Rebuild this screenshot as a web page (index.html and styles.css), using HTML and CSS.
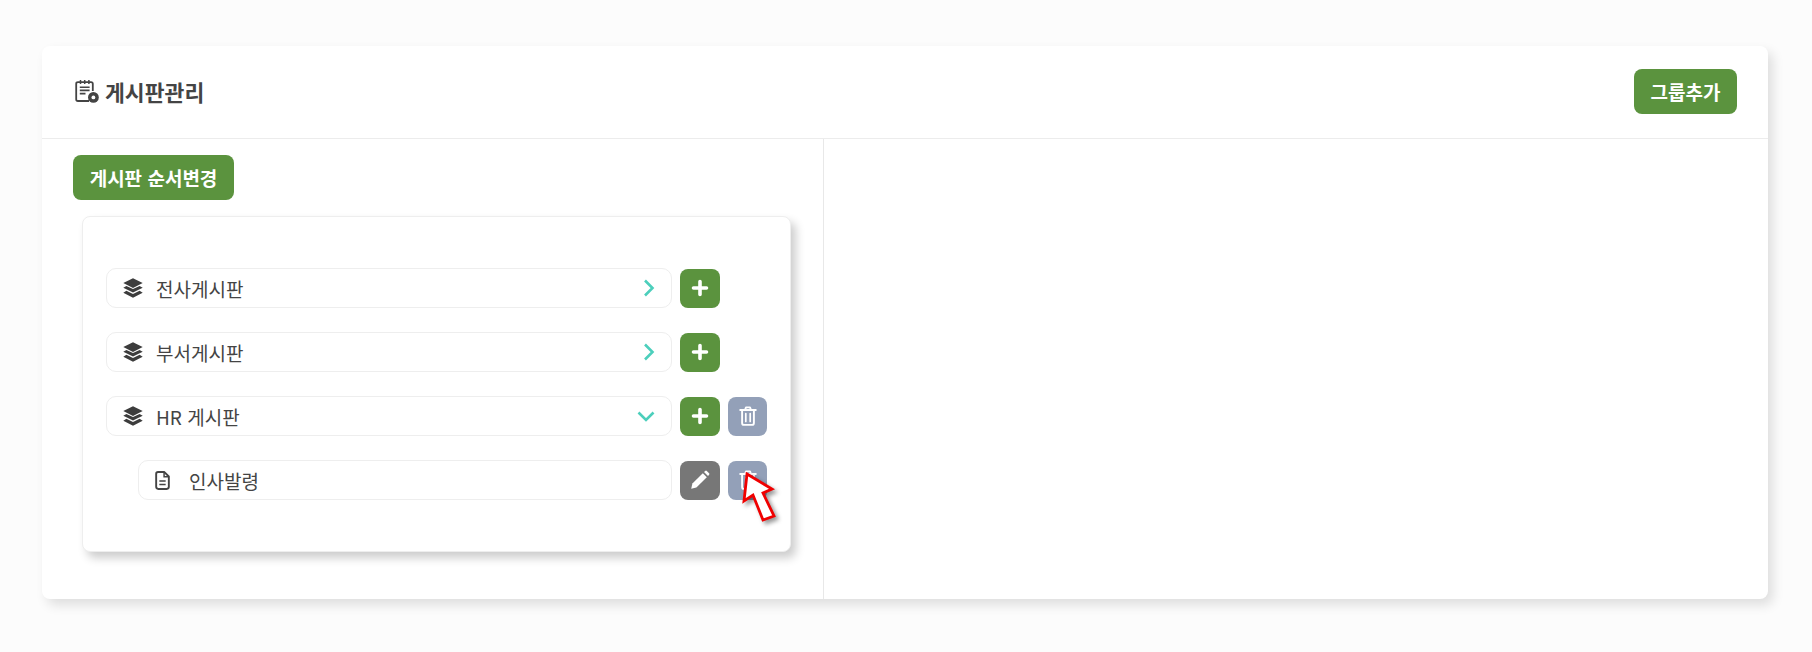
FILE: index.html
```html
<!doctype html>
<html lang="ko">
  <head>
    <meta charset="UTF-8" />
    <title>게시판관리</title>
    <link rel="stylesheet" href="styles.css">
  </head>
  <body>
    <svg class="defs" width="0" height="0">
      <symbol id="layers" viewBox="0 0 20 20">
        <path d="M10 0.3 L19.7 5 L10 9.9 L0.3 5 Z" fill="currentColor"/>
        <path d="M3.4 7.9 L10 11.1 L16.6 7.9 L19.7 9.7 L10 14.6 L0.3 9.7 Z" fill="currentColor"/>
        <path d="M3.4 12.8 L10 16 L16.6 12.8 L19.7 14.8 L10 19.7 L0.3 14.8 Z" fill="currentColor"/>
      </symbol>
      <symbol id="plus" viewBox="0 0 18 18">
        <path d="M9 2.5 V15.5 M2.5 9 H15.5" fill="none" stroke="currentColor" stroke-width="3.6" stroke-linecap="round"/>
      </symbol>
      <symbol id="trash" viewBox="0 0 18 20">
        <path d="M1.2 4 H16.8 M6 4 L7 1.4 H11 L12 4" fill="none" stroke="currentColor" stroke-width="1.9" stroke-linecap="round" stroke-linejoin="round"/>
        <path d="M3.1 4 V17 Q3.1 18.9 5 18.9 H13 Q14.9 18.9 14.9 17 V4" fill="none" stroke="currentColor" stroke-width="1.9"/>
        <path d="M6.8 7.5 V15.5 M11.2 7.5 V15.5" fill="none" stroke="currentColor" stroke-width="1.7" stroke-linecap="round"/>
      </symbol>
      <symbol id="chevron-right" viewBox="0 0 12 18">
        <path d="M2 1.5 L9.5 9 L2 16.5" fill="none" stroke="currentColor" stroke-width="2.6"/>
      </symbol>
      <symbol id="chevron-down" viewBox="0 0 18 11">
        <path d="M1.5 1.5 L9 9 L16.5 1.5" fill="none" stroke="currentColor" stroke-width="2.6"/>
      </symbol>
    </svg>

    <div class="card">
      <div class="card-head">
        <h1 class="title">
          <svg class="title-icon" viewBox="0 0 24 24">
            <path d="M14 22 H3 Q1.2 22 1.2 20.2 V4.8 Q1.2 3.1 3 3.1 H16 Q17.8 3.1 17.8 4.8 V12" fill="none" stroke="#444" stroke-width="1.8"/>
            <path d="M5.5 1 V5 M9.7 1 V5 M13.9 1 V5" stroke="#444" stroke-width="1.5"/>
            <path d="M4.8 8.2 H14.6 M4.8 11.4 H14.6 M4.8 14.6 H10.5" stroke="#444" stroke-width="1.6"/>
            <circle cx="18.4" cy="18.4" r="5.4" fill="#444"/>
            <circle cx="18.4" cy="18.4" r="1.9" fill="#fff"/>
          </svg>
          게시판관리
        </h1>
        <button class="btn btn-group">그룹추가</button>
      </div>

      <div class="card-body">
        <div class="left">
          <button class="btn btn-order">게시판 순서변경</button>
          <div class="panel">
            <div class="row">
              <div class="field">
                <svg class="layers"><use href="#layers"/></svg>
                <span class="name">전사게시판</span>
                <svg class="chevron-r"><use href="#chevron-right"/></svg>
              </div>
              <button class="tool tool-add"><svg class="i-plus"><use href="#plus"/></svg></button>
            </div>
            <div class="row">
              <div class="field">
                <svg class="layers"><use href="#layers"/></svg>
                <span class="name">부서게시판</span>
                <svg class="chevron-r"><use href="#chevron-right"/></svg>
              </div>
              <button class="tool tool-add"><svg class="i-plus"><use href="#plus"/></svg></button>
            </div>
            <div class="row">
              <div class="field">
                <svg class="layers"><use href="#layers"/></svg>
                <span class="name">HR 게시판</span>
                <svg class="chevron-d"><use href="#chevron-down"/></svg>
              </div>
              <button class="tool tool-add"><svg class="i-plus"><use href="#plus"/></svg></button>
              <button class="tool tool-del"><svg class="i-trash"><use href="#trash"/></svg></button>
            </div>
            <div class="row">
              <div class="field field-sub">
                <svg class="i-file" viewBox="0 0 14 18">
                  <path d="M2.8 1 H8.8 L13 5.2 V15 Q13 17 11 17 H3 Q1 17 1 15 V2.8 Q1 1 2.8 1 Z" fill="none" stroke="currentColor" stroke-width="1.8" stroke-linejoin="round"/>
                  <path d="M8.5 1.2 V5.5 H12.8" fill="none" stroke="currentColor" stroke-width="1.4"/>
                  <path d="M4 9.4 H10 M4 12.8 H10" stroke="currentColor" stroke-width="1.5"/>
                </svg>
                <span class="name">인사발령</span>
              </div>
              <button class="tool tool-edit">
                <svg class="i-pencil" viewBox="0 0 20 20">
                  <path d="M1.2 18.8 L2.4 13.6 L12.8 3.2 L16.8 7.2 L6.4 17.6 Z" fill="currentColor"/>
                  <path d="M14 2 L15.2 0.9 Q16 0.2 16.8 0.9 L19.1 3.2 Q19.8 4 19.1 4.8 L18 6 Z" fill="currentColor"/>
                </svg>
              </button>
              <button class="tool tool-del"><svg class="i-trash"><use href="#trash"/></svg></button>
              <svg class="pointer" viewBox="0 0 40 56">
                <path d="M7 5 L32 20 L23 24 L34 47 L23 51 L13 26 L4 32 Z" fill="#fff" stroke="#f00000" stroke-width="2.8" stroke-linejoin="miter"/>
              </svg>
            </div>
          </div>
        </div>
        <div class="right"></div>
      </div>
    </div>
  </body>
</html>
```

FILE: styles.css
```css
body {
  margin: 0;
  height: 652px;
  overflow: hidden;
  background-color: #fcfcfc;
  font-family: "Noto Sans CJK KR", "Noto Sans", sans-serif;
  color: #444;
}

.defs {
  position: absolute;
}

.card {
  width: 1726px;
  height: 553px;
  margin: 46px 0 0 42px;
  display: flex;
  flex-direction: column;
  background-color: #fff;
  border-radius: 8px;
  box-shadow: 5px 6px 12px rgba(0, 0, 0, 0.12);
}

.card-head {
  height: 90px;
  padding: 0 31px 2px 33px;
  display: flex;
  justify-content: space-between;
  align-items: center;
  border-bottom: 1px solid #ececec;
}

.title {
  margin: 0;
  display: flex;
  align-items: center;
  gap: 6px;
  font-size: 21.6px;
  font-weight: 700;
  color: #444;
}

.title-icon {
  width: 24px;
  height: 24px;
}

.btn {
  height: 45px;
  border: none;
  border-radius: 8px;
  background-color: #5b933e;
  color: #fff;
  font-family: inherit;
  font-size: 19px;
  font-weight: 700;
  padding: 0;
  cursor: pointer;
}

.btn-group {
  width: 103px;
}

.btn-order {
  display: block;
  width: 161px;
}

.card-body {
  flex: 1;
  display: flex;
}

.left {
  width: 782px;
  padding: 16px 0 0 31px;
  box-sizing: border-box;
  border-right: 1px solid #e8e8e8;
}

.panel {
  position: relative;
  width: 709px;
  height: 336px;
  margin: 16px 0 0 9px;
  padding: 51px 0 0 23px;
  box-sizing: border-box;
  border: 1px solid #eeeeee;
  border-radius: 8px;
  background-color: #fff;
  box-shadow: 5px 6px 10px rgba(0, 0, 0, 0.2);
}

.row {
  position: relative;
  height: 40px;
  margin-bottom: 24px;
  display: flex;
  align-items: center;
  gap: 8px;
}

.field {
  width: 566px;
  height: 40px;
  box-sizing: border-box;
  padding: 0 16px;
  display: flex;
  align-items: center;
  border: 1px solid #eeeeee;
  border-radius: 10px;
  font-size: 19px;
  color: #444;
}

.field-sub {
  width: 534px;
  margin-left: 32px;
}

.layers {
  width: 20px;
  height: 20px;
  color: #3c3c3c;
}

.name {
  flex: 1;
  margin-left: 13px;
}

.field-sub .name {
  margin-left: 19px;
}

.chevron-r {
  width: 12px;
  height: 18px;
  color: #4ccfbc;
}

.chevron-d {
  width: 18px;
  height: 11px;
  color: #4ccfbc;
}

.i-file {
  width: 15px;
  height: 19px;
  color: #444;
}

.tool {
  width: 40px;
  height: 39px;
  padding: 0;
  display: flex;
  justify-content: center;
  align-items: center;
  border: none;
  border-radius: 8px;
  color: #fff;
  cursor: pointer;
}

.tool-add {
  background-color: #5b933e;
}

.tool-del {
  width: 39px;
  background-color: #93a0b8;
}

.tool-edit {
  background-color: #777777;
}

.i-plus {
  width: 18px;
  height: 18px;
}

.i-trash {
  width: 18px;
  height: 20px;
}

.i-pencil {
  width: 20px;
  height: 20px;
}

/* red arrow marking the delete button */
.pointer {
  position: absolute;
  left: 634px;
  top: 9px;
  width: 40px;
  height: 56px;
  filter: drop-shadow(3px 3px 2px rgba(0, 0, 0, 0.4));
}

.right {
  flex: 1;
}
```
